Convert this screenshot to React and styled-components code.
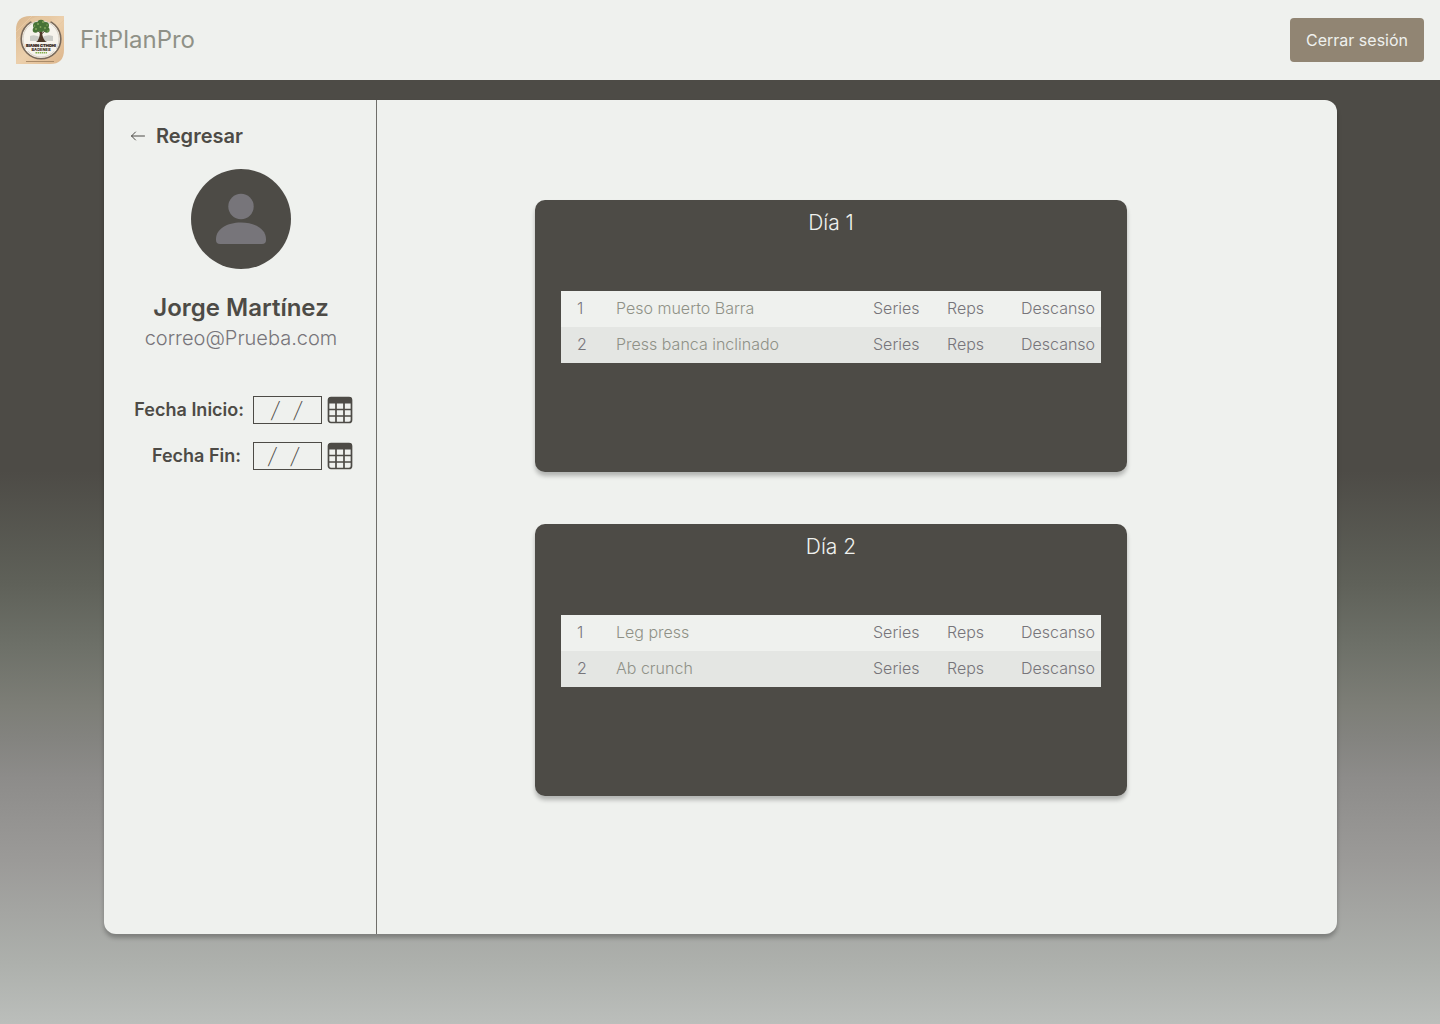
import React from 'react';
import styled, { createGlobalStyle } from 'styled-components';

const ink = '#4d4b46';
const paper = '#eff1ee';
const muted = '#77757a';
const sage = '#8f9187';

const GlobalStyle = createGlobalStyle`
  * { box-sizing: border-box; }
  body {
    margin: 0;
    font-family: Inter, "Liberation Sans", sans-serif;
    color: ${ink};
  }
`;

const Page = styled.div`
  min-height: 100vh;
  display: flex;
  flex-direction: column;
  background: linear-gradient(
    ${ink} 0%, ${ink} 46%, #5f6159 57%, #6d7068 63%, #7d7e77 69%,
    #83837f 72%, #8d8c8a 76%, #9b9a98 84%, #adb0ac 94%, #bbbebb 100%
  );
`;

const Header = styled.header`
  height: 80px;
  padding: 0 16px;
  display: flex;
  align-items: center;
  justify-content: space-between;
  background: ${paper};
`;

const Brand = styled.div`
  display: flex;
  align-items: center;
  gap: 16px;
  font-size: 24px;
  line-height: 32px;
  color: ${sage};
`;

const LogoutButton = styled.button`
  height: 44px;
  padding: 0 16px;
  border: 0;
  border-radius: 4px;
  background: #918573;
  color: ${paper};
  font: inherit;
  font-size: 16px;
  cursor: pointer;
`;

const Content = styled.main`
  flex: 1;
  display: flex;
  padding: 20px 103px 90px 104px;
`;

const Panel = styled.div`
  flex: 1;
  display: flex;
  border-radius: 12px;
  background: ${paper};
  box-shadow: 0 4px 4px rgba(0, 0, 0, 0.25);
`;

const Sidebar = styled.aside`
  flex: 0 0 273px;
  padding: 20px 22px 20px 24px;
  border-right: 1px solid #6f6e6a;
  display: flex;
  flex-direction: column;
`;

const BackLink = styled.a`
  display: flex;
  align-items: center;
  gap: 8px;
  color: inherit;
  font-size: 20px;
  line-height: 32px;
  font-weight: 600;
  text-decoration: none;
`;

const Profile = styled.section`
  display: flex;
  flex-direction: column;
  align-items: center;
  margin-top: 16px;
`;

const Name = styled.h1`
  margin: 22px 0 0;
  font-size: 24px;
  line-height: 32px;
  font-weight: 600;
`;

const Email = styled.p`
  margin: 0;
  font-size: 20px;
  line-height: 28px;
  font-weight: 300;
  color: ${muted};
`;

const Dates = styled.form`
  margin-top: 44px;
  display: flex;
  flex-direction: column;
  gap: 18px;
`;

const DateField = styled.div`
  display: grid;
  grid-template-columns: 120px 69px 26px;
  align-items: center;
  column-gap: 5px;
`;

const DateLabel = styled.label`
  font-size: 18px;
  line-height: 28px;
  font-weight: 600;
  white-space: nowrap;
  text-align: right;
  padding-right: ${({ $inset }) => $inset}px;
`;

const DateInput = styled.input`
  width: 100%;
  height: 28px;
  padding: 0 ${({ $inset }) => $inset}px 0 0;
  border: 1px solid ${ink};
  border-radius: 0;
  background: transparent;
  color: ${ink};
  font: inherit;
  font-size: 22px;
  font-style: italic;
  font-weight: 200;
  text-align: center;
  white-space: pre;
`;

const CalendarButton = styled.button`
  display: flex;
  padding: 0;
  border: 0;
  background: none;
  color: ${ink};
  cursor: pointer;
`;

const Routine = styled.section`
  flex: 1;
  display: flex;
  flex-direction: column;
  align-items: center;
  gap: 52px;
  padding: 100px 78px 100px 26px;
`;

const DayCard = styled.article`
  width: 100%;
  max-width: 592px;
  min-height: 272px;
  padding: 8px 26px;
  border-radius: 10px;
  background: ${ink};
  box-shadow: 0 4px 4px rgba(0, 0, 0, 0.25);
`;

const DayTitle = styled.h2`
  margin: 0 0 53px;
  font-size: 21px;
  line-height: 30px;
  font-weight: 300;
  text-align: center;
  color: ${paper};
`;

const ExerciseTable = styled.table`
  width: 100%;
  table-layout: fixed;
  border-collapse: collapse;
  font-size: 16px;
  line-height: 20px;
  font-weight: 300;
  color: ${muted};
`;

const Column = styled.col`
  width: ${({ $width }) => ($width ? `${$width}px` : 'auto')};
`;

const ExerciseRow = styled.tr`
  height: 36px;
  background: ${paper};
  &:nth-child(even) { background: #e4e6e3; }
`;

const Cell = styled.td`
  padding: 0 0 2px ${({ $indent }) => $indent || 0}px;
  color: ${({ $soft }) => ($soft ? sage : 'inherit')};
  white-space: nowrap;
`;

const Logo = () => (
  <svg width="48" height="48" viewBox="0 0 48 48" role="img" aria-label="FitPlanPro">
    <defs>
      <linearGradient id="wood" x1="0" y1="0" x2="1" y2="1">
        <stop offset="0" stopColor="#d9b68d" />
        <stop offset="0.5" stopColor="#ecd0ac" />
        <stop offset="1" stopColor="#dcb58b" />
      </linearGradient>
    </defs>
    <path d="M14 0H48V34Q48 48 34 48H0V14Q0 0 14 0Z" fill="url(#wood)" />
    <path d="M0 16L16 0M0 24L10 14M40 12L48 4" stroke="#e8c9a4" strokeWidth="1" />
    <path d="M10 45.500H38" stroke="#a98b69" strokeWidth="1" />
    <circle cx="25" cy="23" r="19" fill="#f6f3ec" />
    <circle cx="25" cy="23" r="19.800" fill="none" stroke="#77695c" strokeWidth="1.600" />
    <circle cx="25" cy="23" r="18" fill="none" stroke="#c9c1b8" strokeWidth="0.700" />
    <path d="M15 5Q25 0 35 5" stroke="#e6c8a1" strokeWidth="4" fill="none" />
    <path d="M14 20Q20 18 25 22Q30 18 37 20V25H14Z" fill="#cbccc7" />
    <path d="M24.500 17L21 14M25.500 18L30 14" stroke="#4d3828" strokeWidth="1" />
    <path d="M20 26Q24 24 24 14H26Q26 24 31 26Z" fill="#4d3828" />
    <g fill="#477337">
      <circle cx="25" cy="7.500" r="3.800" />
      <circle cx="20.500" cy="9.500" r="3.500" />
      <circle cx="29.500" cy="9.500" r="3.500" />
      <circle cx="19.500" cy="14" r="2.800" />
      <circle cx="30.800" cy="14" r="2.800" />
      <circle cx="25" cy="12.500" r="3.500" />
    </g>
    <g fill="#83a65c">
      <circle cx="22" cy="8" r="1" /><circle cx="27" cy="6" r="1" />
      <circle cx="29" cy="12" r="1" /><circle cx="20" cy="13" r="1" />
      <circle cx="24.500" cy="11" r="0.900" /><circle cx="31" cy="9" r="0.800" />
      <circle cx="18.500" cy="10" r="0.800" /><circle cx="32" cy="15" r="0.800" />
    </g>
    <rect x="10" y="26" width="30" height="9" fill="#f6f3ec" />
    <text x="25" y="31" textAnchor="middle" fontFamily="Inter, sans-serif" fontSize="4" fontWeight="900" fill="#3a2b24" stroke="#3a2b24" strokeWidth="0.200">BIANN CTHOHI</text>
    <text x="25" y="35" textAnchor="middle" fontFamily="Inter, sans-serif" fontSize="4" fontWeight="800" fill="#3a2b24">BADENES</text>
    <path d="M19.500 36.800H31" stroke="#83b04c" strokeWidth="1.500" strokeDasharray="1.500 0.600" />
  </svg>
);

const ArrowLeft = () => (
  <svg width="20" height="20" viewBox="0 0 20 20" fill="none" stroke={ink} strokeWidth="1" strokeLinecap="round" strokeLinejoin="round" aria-hidden="true">
    <path d="M16.500 10H3.500M7.500 6L3.500 10L7.500 14" />
  </svg>
);

const Avatar = () => (
  <svg width="102" height="102" viewBox="0 0 102 102" role="img" aria-label="Foto de perfil">
    <circle cx="51" cy="51" r="50" fill={ink} />
    <g fill={muted}>
      <circle cx="51" cy="38.500" r="12.700" />
      <path d="M26 71C26 61 37 54.500 51 54.500S76 61 76 71V72Q76 76 72 76H30Q26 76 26 72Z" />
    </g>
  </svg>
);

const Calendar = () => (
  <svg width="26" height="28" viewBox="0 0 26 28" aria-hidden="true">
    <rect x="1.500" y="1.500" width="23" height="25" rx="2.500" fill="none" stroke="currentColor" strokeWidth="1.700" />
    <path d="M1 7.500V4Q1 1 4 1H22Q25 1 25 4V7.500Z" fill="currentColor" />
    <path d="M1.500 13.500H24.500M1.500 20H24.500M9 7V26.500M17 7V26.500" stroke="currentColor" strokeWidth="1.700" />
  </svg>
);

const days = [
  { title: 'Día 1', exercises: ['Peso muerto Barra', 'Press banca inclinado'] },
  { title: 'Día 2', exercises: ['Leg press', 'Ab crunch'] },
];

const dateFields = [
  { id: 'fecha-inicio', label: 'Fecha Inicio:', labelInset: 4, valueInset: 2 },
  { id: 'fecha-fin', label: 'Fecha Fin:', labelInset: 7, valueInset: 8 },
];

const columnWidths = [55, null, 74, 74, 80];

export default function App() {
  return (
    <Page>
      <GlobalStyle />
      <Header>
        <Brand><Logo />FitPlanPro</Brand>
        <LogoutButton type="button">Cerrar sesión</LogoutButton>
      </Header>
      <Content>
        <Panel>
          <Sidebar>
            <BackLink href="#regresar"><ArrowLeft />Regresar</BackLink>
            <Profile>
              <Avatar />
              <Name>Jorge Martínez</Name>
              <Email>correo@Prueba.com</Email>
            </Profile>
            <Dates>
              {dateFields.map((field) => (
                <DateField key={field.id}>
                  <DateLabel htmlFor={field.id} $inset={field.labelInset}>{field.label}</DateLabel>
                  <DateInput id={field.id} type="text" defaultValue={'/\u2002\u2009/'} $inset={field.valueInset} />
                  <CalendarButton type="button" aria-label={`Elegir ${field.label}`}><Calendar /></CalendarButton>
                </DateField>
              ))}
            </Dates>
          </Sidebar>
          <Routine>
            {days.map((day) => (
              <DayCard key={day.title}>
                <DayTitle>{day.title}</DayTitle>
                <ExerciseTable aria-label={day.title}>
                  <colgroup>
                    {columnWidths.map((width, index) => (
                      <Column key={index} $width={width} />
                    ))}
                  </colgroup>
                  <tbody>
                    {day.exercises.map((exercise, index) => (
                      <ExerciseRow key={exercise}>
                        <Cell $indent={16}>{index + 1}</Cell>
                        <Cell $soft>{exercise}</Cell>
                        <Cell>Series</Cell>
                        <Cell>Reps</Cell>
                        <Cell>Descanso</Cell>
                      </ExerciseRow>
                    ))}
                  </tbody>
                </ExerciseTable>
              </DayCard>
            ))}
          </Routine>
        </Panel>
      </Content>
    </Page>
  );
}
